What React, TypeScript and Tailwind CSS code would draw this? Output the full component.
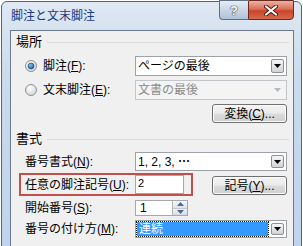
import React from 'react'

const font = "font-['Liberation_Sans','Noto_Sans_CJK_JP',sans-serif]"

function Key({ children }: { children: React.ReactNode }) {
  return <span className="underline underline-offset-[1px]">{children}</span>
}

function Arrow({ color = '#000' }: { color?: string }) {
  return (
    <svg width="7" height="4" viewBox="0 0 7 4">
      <path d="M0 0h7L3.5 4z" fill={color} />
    </svg>
  )
}

function Combo({
  text,
  disabled,
  selected,
  h,
}: {
  text: React.ReactNode
  disabled?: boolean
  selected?: boolean
  h: string
}) {
  return (
    <div
      className={`flex w-[152px] items-center border ${h} ${
        disabled ? 'border-[#c3c6ca] bg-[#f4f4f4] text-[#8a8a8a]' : 'border-[#9da2a8] bg-white text-black'
      }`}
    >
      <div className="flex h-full flex-1 items-center pl-px">
        {selected ? (
          <span className="flex h-[calc(100%-2px)] w-[131px] items-center bg-[#3399ff] pl-[2px] text-white outline-1 outline-dotted outline-[#1a1a1a]">
            {text}
          </span>
        ) : (
          <span className="pl-[1px]">{text}</span>
        )}
      </div>
      <div
        className={`mr-[2px] flex h-[calc(100%-4px)] w-[13px] items-center justify-center ${
          disabled
            ? 'bg-[#f4f4f4]'
            : 'rounded-[2px] border border-[#8c8f94] bg-[linear-gradient(#f7f7f7,#e4e4e4_50%,#d4d4d4)]'
        }`}
      >
        <Arrow color={disabled ? '#b8b8b8' : '#000'} />
      </div>
    </div>
  )
}

function Button({ children, w }: { children: React.ReactNode; w: string }) {
  return (
    <div
      className={`flex h-[19px] ${w} items-center justify-center rounded-[3px] border border-[#707070] bg-[linear-gradient(#f4f4f4,#ebebeb_48%,#dcdcdc_52%,#cfcfcf)] text-[12px] text-black shadow-[inset_0_0_0_1px_#fbfbfb]`}
    >
      {children}
    </div>
  )
}

function Radio({ checked }: { checked?: boolean }) {
  return (
    <svg width="12" height="12" viewBox="0 0 12 12" className="shrink-0">
      <defs>
        <radialGradient id={checked ? 'rc' : 'ru'} cx="0.4" cy="0.35" r="0.7">
          <stop offset="0" stopColor="#ffffff" />
          <stop offset="1" stopColor="#d2d2d2" />
        </radialGradient>
        <radialGradient id="dot" cx="0.4" cy="0.35" r="0.7">
          <stop offset="0" stopColor="#8cc8f2" />
          <stop offset="1" stopColor="#0f4f93" />
        </radialGradient>
      </defs>
      <circle cx="6" cy="6" r="5.5" fill={`url(#${checked ? 'rc' : 'ru'})`} stroke="#8e9196" />
      {checked && <circle cx="6" cy="6" r="3" fill="url(#dot)" stroke="#1a4e86" strokeWidth="0.6" />}
    </svg>
  )
}

export default function App() {
  return (
    <div className={`h-[246px] w-[303px] overflow-hidden bg-white ${font}`}>
      <div className="ml-px mt-px flex h-[260px] w-[301px] flex-col rounded-t-[6px] border border-[#55667b] bg-[linear-gradient(#dfe8f3,#cbdaec_30%,#bfd3ec)]">
        {/* title bar */}
        <div className="flex h-[28px] shrink-0 items-start">
          <span className="mt-[6px] pl-[9px] text-[12px] leading-4 text-[#1d3a80]">脚注と文末脚注</span>
          <div className="ml-auto mr-[7px] -mt-[2px] flex">
            <div className="flex h-[20px] w-[29px] items-center justify-center rounded-bl-[4px] border border-r-0 border-[#5f6f84] bg-[linear-gradient(#e6edf5,#c9d6e5_50%,#b0c2d8)]">
              <span className="text-[13px] font-bold leading-none text-white [text-shadow:0_0_1px_#2c3a4e,0_0_1px_#2c3a4e,0_0_1px_#2c3a4e]">?</span>
            </div>
            <div className="flex h-[20px] w-[46px] items-center justify-center rounded-br-[4px] border border-[#6a2a22] bg-[linear-gradient(#eab2a4,#db6e57_45%,#c9452c_55%,#d36a4e)]">
              <svg width="14" height="11" viewBox="0 0 14 11">
                <path d="M2 1.5l10 8M12 1.5l-10 8" stroke="#4a1a14" strokeWidth="4" strokeLinecap="round" />
                <path d="M2 1.5l10 8M12 1.5l-10 8" stroke="#ffffff" strokeWidth="2.2" strokeLinecap="round" />
              </svg>
            </div>
          </div>
        </div>

        {/* client area */}
        <div className="ml-[8px] mr-[7px] flex-1 border border-[#6b7b8f] bg-[#f0f0f0] text-[12px] leading-4 text-black">
          <div className="relative flex flex-col">
            <div className="mt-[3px] flex h-4 items-center pl-[5px] pr-[4px]">
              <span className="text-[13px]">場所</span>
              <div className="ml-[5px] h-px flex-1 bg-[#d9dde2]" />
            </div>

            <div className="mt-[6px] flex h-5 items-center">
              <div className="flex w-[124px] shrink-0 items-center gap-[6px] pl-[14px]">
                <Radio checked />
                <span>
                  脚注(<Key>F</Key>):
                </span>
              </div>
              <Combo text="ページの最後" h="h-5" />
            </div>

            <div className="mt-[4px] flex h-5 items-center">
              <div className="flex w-[124px] shrink-0 items-center gap-[6px] pl-[14px]">
                <Radio />
                <span>
                  文末脚注(<Key>E</Key>):
                </span>
              </div>
              <Combo text="文書の最後" h="h-5" disabled />
            </div>

            <div className="mt-[4px] flex justify-end pr-[6px]">
              <Button w="w-[75px]">
                変換(<Key>C</Key>)...
              </Button>
            </div>

            <div className="mt-[8px] flex h-4 items-center pl-[5px] pr-[4px]">
              <span className="text-[13px]">書式</span>
              <div className="ml-[5px] h-px flex-1 bg-[#d9dde2]" />
            </div>

            <div className="mt-[5px] flex h-[19px] items-center">
              <div className="w-[124px] shrink-0 pl-[14px]">
                番号書式(<Key>N</Key>):
              </div>
              <Combo
                text={
                  <>
                    1, 2, 3, <span className="font-['Noto_Sans_CJK_JP',sans-serif] font-bold">…</span>
                  </>
                }
                h="h-[19px]"
              />
            </div>

            <div className="mt-[4px] flex h-5 items-start pr-[6px]">
              <div className="flex h-[19px] w-[124px] shrink-0 items-center pl-[14px]">
                任意の脚注記号(<Key>U</Key>):
              </div>
              <div className="flex h-[19px] w-[49px] items-start border border-[#a4a8ae] bg-white pl-[2px] pt-px text-[11px] leading-3">
                2
              </div>
              <div className="ml-auto mt-px">
                <Button w="w-[75px]">
                  記号(<Key>Y</Key>)...
                </Button>
              </div>
            </div>

            <div className="mt-[5px] flex h-4 items-center">
              <div className="w-[124px] shrink-0 pl-[14px]">
                開始番号(<Key>S</Key>):
              </div>
              <div className="flex h-4 w-[53px] border border-[#a4a8ae] bg-white">
                <span className="flex-1 pl-[4px] leading-[14px]">1</span>
                <div className="flex w-[15px] flex-col border-l border-[#b5bac1]">
                  <div className="flex flex-1 items-center justify-center bg-[linear-gradient(#f5f7fa,#dde3ea)]">
                    <svg width="7" height="4" viewBox="0 0 7 4">
                      <path d="M0 4h7L3.5 0z" fill="#4d6a92" />
                    </svg>
                  </div>
                  <div className="flex flex-1 items-center justify-center border-t border-[#c3c8ce] bg-[linear-gradient(#eef1f5,#d6dde6)]">
                    <Arrow color="#4d6a92" />
                  </div>
                </div>
              </div>
            </div>

            <div className="mt-[4px] flex h-[18px] items-center">
              <div className="w-[124px] shrink-0 pl-[14px]">
                番号の付け方(<Key>M</Key>):
              </div>
              <Combo text="連続" h="h-[18px]" selected />
            </div>

            {/* highlight annotation */}
            <div className="absolute left-[8px] top-[142px] h-[23px] w-[174px] border-2 border-[#c0504d]" />
          </div>
        </div>
      </div>
    </div>
  )
}
